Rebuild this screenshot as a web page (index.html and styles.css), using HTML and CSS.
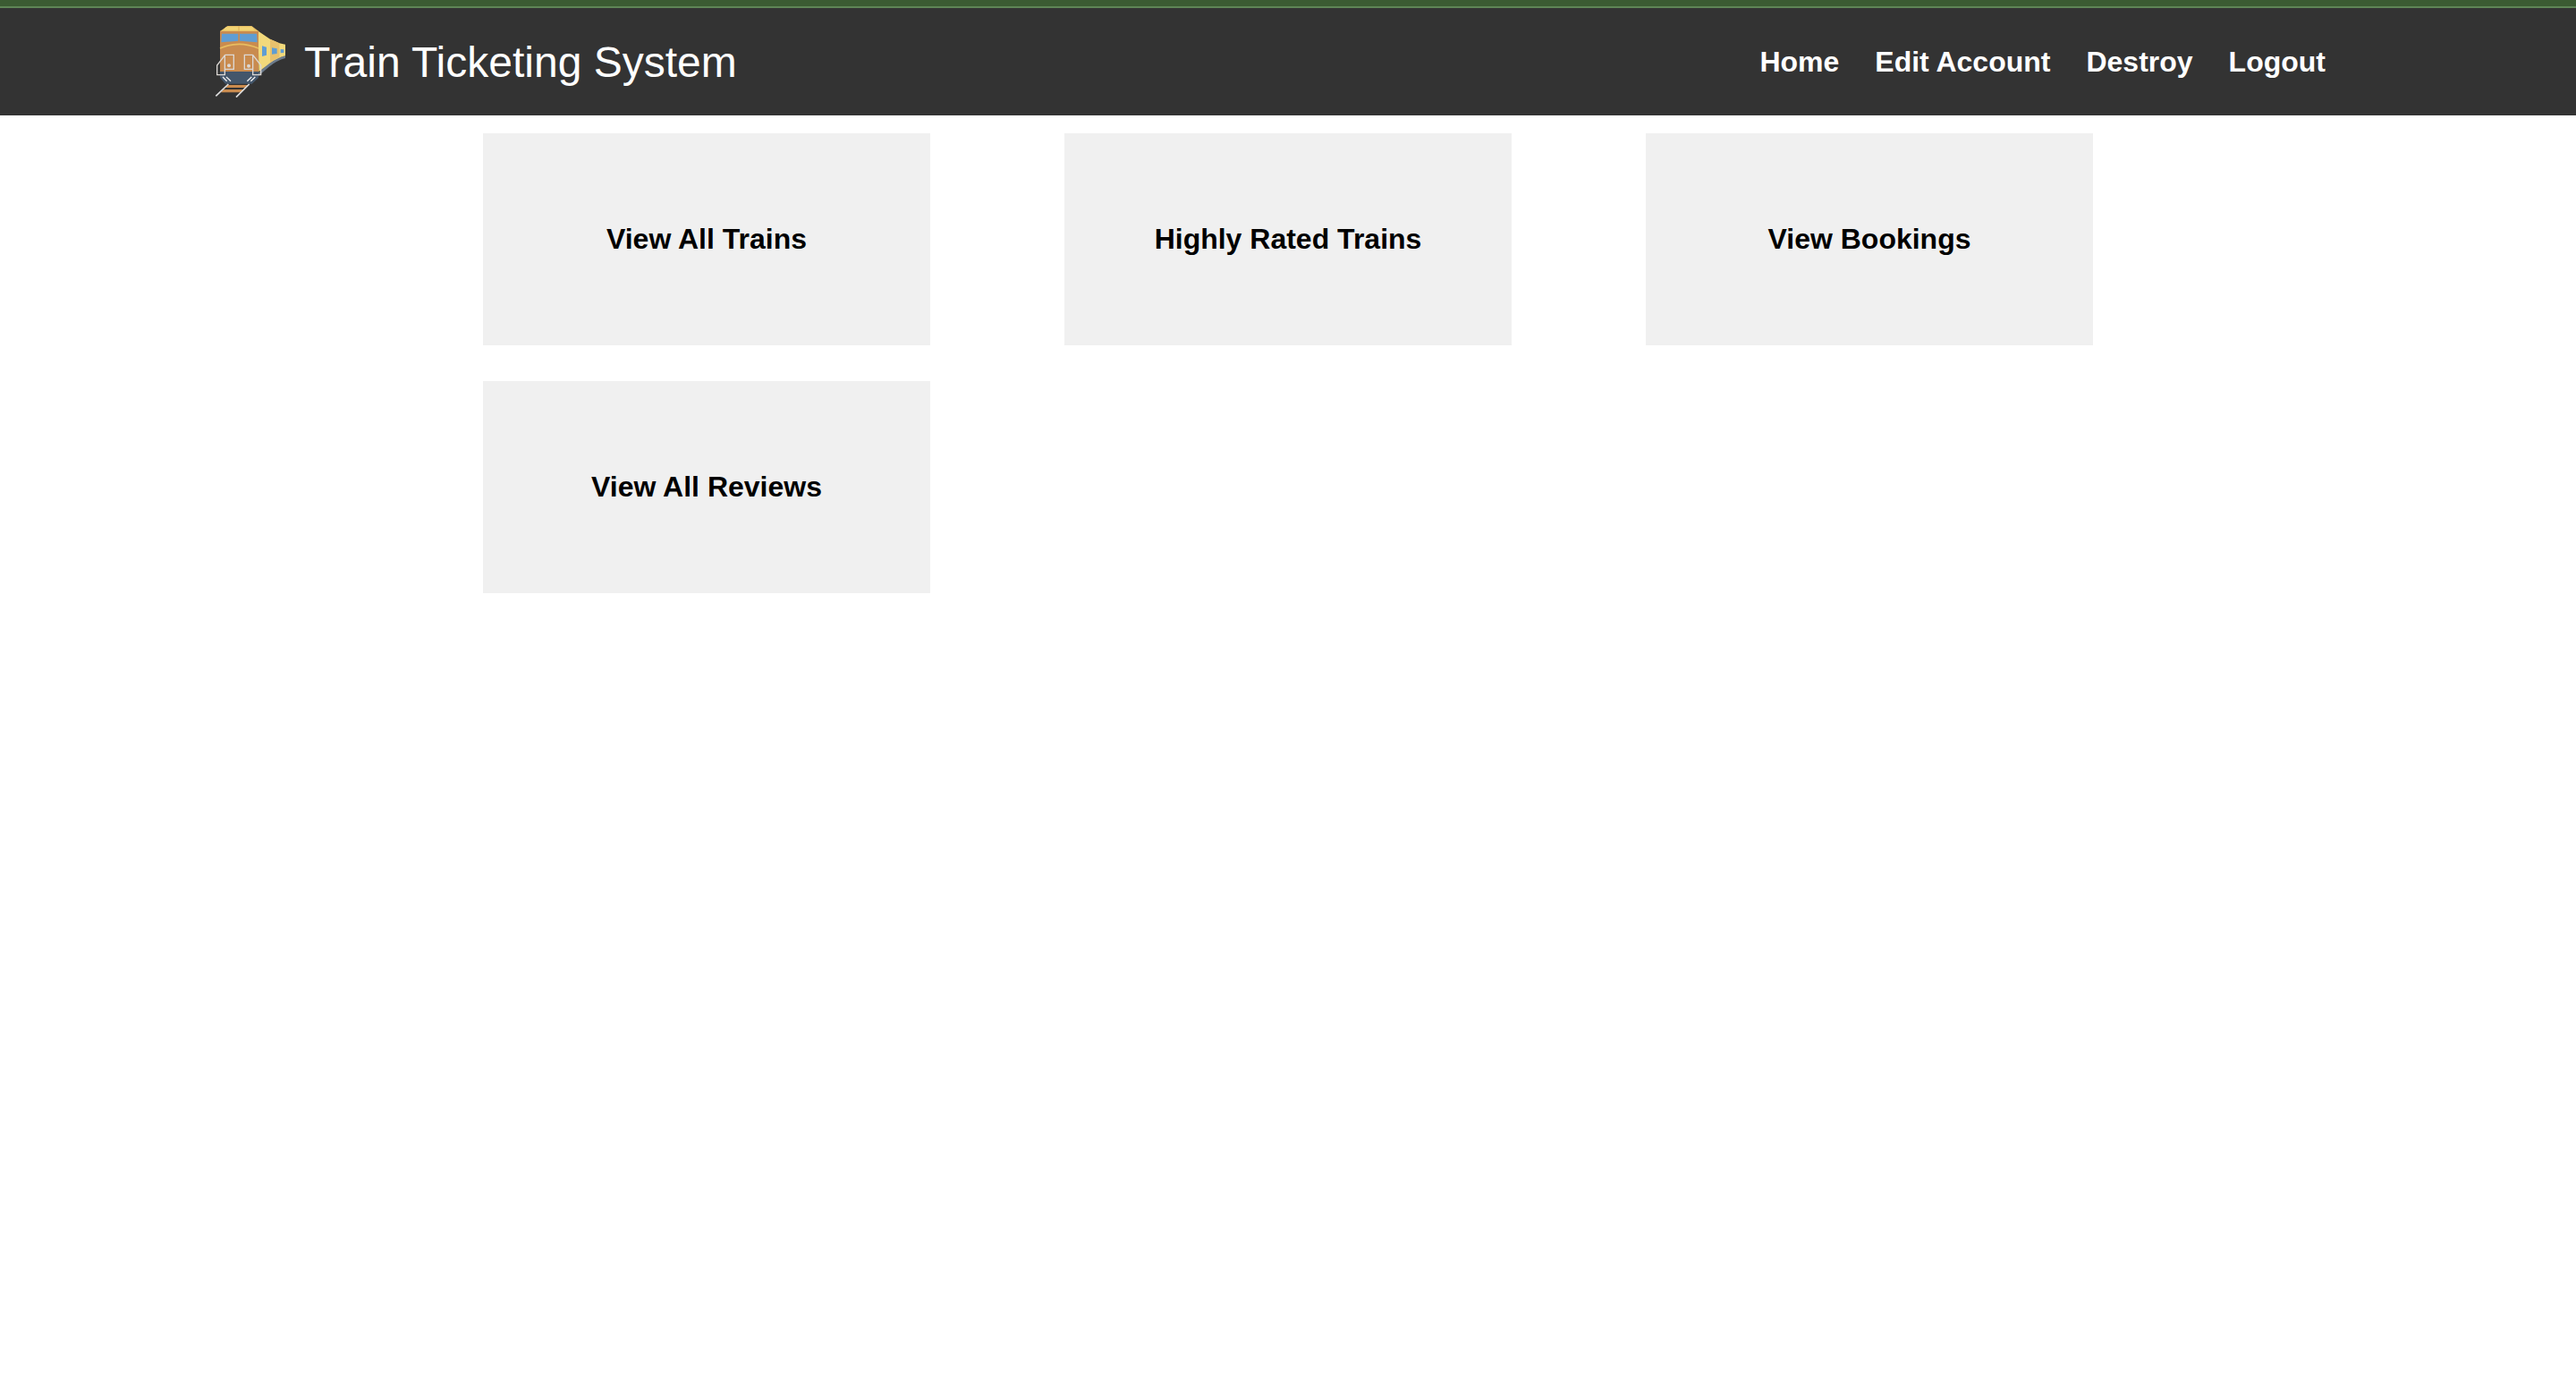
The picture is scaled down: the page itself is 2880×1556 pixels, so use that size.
FILE: index.html
```html
<!DOCTYPE html>
<html lang="en">
<head>
  <meta charset="utf-8">
  <meta name="viewport" content="width=device-width, initial-scale=1">
  <title>Train Ticketing System</title>
  <link rel="stylesheet" href="styles.css">
</head>
<body>
  <header class="header">
    <div class="header-inner">
      <div class="brand">
        <svg class="logo" viewBox="30 87 240 240" aria-hidden="true">
          <!-- carriages behind the engine -->
          <path fill="#6c7b8c" d="M176 246L206 216Q236 192 267 186V195Q238 203 212 224L180 252Q168 264 158 277L150 260Z"/>
          <path fill="#f2d97b" d="M176 104L216 131L247 145L267 149V187Q240 194 216 211L178 241Z"/>
          <path fill="#e8c06c" d="M216 131L247 145V192Q232 198 216 211Z"/>
          <path fill="#5f9dd3" d="M189 154L204 158V185L189 189ZM222 160L239 163V180L222 182ZM251 165L262 166V177L251 178Z"/>
          <!-- engine body -->
          <path fill="#c98b4f" d="M48 104H177V241H48Z"/>
          <path fill="#e9c166" d="M48 105L73 87H154L178 105Z"/>
          <path fill="#f3d676" d="M68 91H156L164 101H58Z"/>
          <path fill="#e3b65c" d="M109 87H113V104H109Z"/>
          <path fill="#5f9dd3" d="M54 113H109V137L52 142ZM114 113H171L173 142L114 137Z"/>
          <path fill="none" stroke="#e8bd60" stroke-width="5" d="M48 162Q112 134 177 162"/>
          <path fill="#43566b" d="M48 240H177V261L155 281H66L48 261Z"/>
          <!-- rails and sleepers -->
          <path fill="#c98b4f" d="M75 285H142L134 294H67ZM59 300H126L118 310H51Z"/>
          <path fill="none" stroke="#dedede" stroke-width="5" d="M76 282L34 322M146 282L102 326"/>
          <!-- doors, hand rails and lamps -->
          <g fill="none" stroke="#dcd8d4" stroke-width="4">
            <path d="M65 184H94V232H65M65 184L38 219V251H64V184"/>
            <path d="M158 184H130V232H158M158 184L185 219V251H158V184"/>
          </g>
          <g fill="#dcd8d4">
            <circle cx="78" cy="220" r="6"/>
            <circle cx="144" cy="221" r="6"/>
          </g>
          <path fill="none" stroke="#f1f1f1" stroke-width="4" d="M57 258L71 272M69 258L84 272M154 258L139 272M166 258L151 272"/>
        </svg>
        <span class="brand-name">Train Ticketing System</span>
      </div>
      <nav class="nav" aria-label="Main">
        <a href="#home">Home</a>
        <a href="#account">Edit Account</a>
        <a href="#destroy">Destroy</a>
        <a href="#logout">Logout</a>
      </nav>
    </div>
  </header>
  <main class="menu">
    <button type="button" class="card">View All Trains</button>
    <button type="button" class="card">Highly Rated Trains</button>
    <button type="button" class="card">View Bookings</button>
    <button type="button" class="card">View All Reviews</button>
  </main>
</body>
</html>
```
FILE: styles.css
```css
* {
  box-sizing: border-box;
}

body {
  margin: 0;
  background: #fff;
  border-top: 7px solid #3b5b32;
  font-family: "Liberation Sans", Arial, sans-serif;
  font-size: 32px;
}

.header {
  padding-right: 40px;
  border-top: 2px solid #5f8556;
  background: #333;
  color: #fff;
}

.header-inner {
  display: flex;
  flex-wrap: wrap;
  align-items: center;
  justify-content: space-between;
  gap: 20px;
  max-width: 2400px;
  margin: 0 auto;
  padding: 20px;
}

.brand {
  display: flex;
  align-items: center;
  gap: 20px;
}

.logo {
  display: block;
  flex: none;
  width: 80px;
  height: 80px;
}

.brand-name {
  font-size: 48px;
}

.nav {
  display: flex;
  flex-wrap: wrap;
  gap: 20px 40px;
}

.nav a {
  color: #fff;
  font-weight: bold;
  text-decoration: none;
}

.menu {
  display: grid;
  grid-template-columns: repeat(auto-fill, minmax(min(100%, 500px), 1fr));
  gap: 40px 150px;
  max-width: 1800px;
  margin: 20px auto;
}

.card {
  padding: 100px 20px;
  border: 0;
  background: #f0f0f0;
  color: #000;
  font: bold 32px/37px "Liberation Sans", Arial, sans-serif;
  text-align: center;
  cursor: pointer;
}
```
